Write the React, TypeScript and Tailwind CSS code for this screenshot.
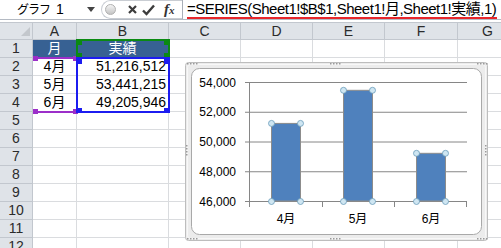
import React from 'react';

const sheetFont = "font-['Liberation_Sans','Noto_Sans_CJK_JP',sans-serif]";

const columns = ['A', 'B', 'C', 'D', 'E', 'F', 'G', ''];

type Row = { a?: string; b?: string; head?: boolean };

const rows: Row[] = [
  { a: '月', b: '実績', head: true },
  { a: '4月', b: '51,216,512' },
  { a: '5月', b: '53,441,215' },
  { a: '6月', b: '49,205,946' },
  {}, {}, {}, {}, {}, {}, {}, {},
];

const data = [
  { label: '4月', value: 51216512 / 1000 },
  { label: '5月', value: 53441215 / 1000 },
  { label: '6月', value: 49205946 / 1000 },
];

// chart y scale: 46,000 at 139, 54,000 at 20
const yOf = (v: number) => 139 - ((v - 46000) / 8000) * 119;

function Grips({ x, y, vertical }: { x: number; y: number; vertical?: boolean }) {
  return (
    <g fill="#9a9a9a">
      {[0, 1, 2, 3].map((i) => (
        <rect key={i} x={vertical ? x : x + i * 3} y={vertical ? y + i * 3 : y} width="1.5" height="1.5" />
      ))}
    </g>
  );
}

function Chart() {
  const bars = [86, 158, 231];
  return (
    <svg width="304" height="180" viewBox="0 0 304 180" className={sheetFont}>
      <rect x="0.5" y="0.5" width="302" height="178" rx="3" fill="#ececec" stroke="#bdbdbd" />
      <rect x="2.5" y="2.5" width="298" height="174" rx="3" fill="none" stroke="#f8f8f8" />
      <rect x="6.5" y="6.5" width="290" height="166" rx="8" fill="#ffffff" stroke="#a9a9a9" />
      <Grips x={145} y={1} />
      <Grips x={145} y={176} />
      <Grips x={1} y={83} vertical />
      <Grips x={300} y={83} vertical />
      <Grips x={2} y={1} />
      <Grips x={292} y={1} />
      <Grips x={2} y={176} />
      <Grips x={292} y={176} />
      {[54000, 52000, 50000, 48000, 46000].map((v) => (
        <g key={v}>
          <line x1="60" x2="282" y1={yOf(v) + 0.5} y2={yOf(v) + 0.5} stroke="#868686" />
          <text x="51" y={yOf(v) + 4.5} fontSize="12" textAnchor="end" fill="#000">
            {v.toLocaleString('en-US')}
          </text>
        </g>
      ))}
      <line x1="64.5" x2="64.5" y1="20" y2="140" stroke="#868686" />
      {[64.5, 137.5, 209.5, 281.5].map((x) => (
        <line key={x} x1={x} x2={x} y1="139" y2="145" stroke="#868686" />
      ))}
      {data.map((d, i) => {
        const x = bars[i];
        const top = yOf(d.value);
        return (
          <g key={d.label}>
            <rect x={x + 0.5} y={top} width="29" height={139 - top} fill="#4f81bd" stroke="#8c8c8c" />
            {[
              [x + 0.5, top],
              [x + 29.5, top],
              [x + 0.5, 139.5],
              [x + 29.5, 139.5],
            ].map(([cx, cy], k) => (
              <circle key={k} cx={cx} cy={cy} r="3" fill="#cfe6f2" stroke="#6a9cba" strokeWidth="0.8" />
            ))}
            <text x={x + 15} y="161" fontSize="12" textAnchor="middle" fill="#000">
              {d.label}
            </text>
          </g>
        );
      })}
    </svg>
  );
}

// a highlighted range with square handles on its corners
function Range({ className, color, handles }: { className: string; color: string; handles: string[] }) {
  return (
    <div className={`absolute ${className}`}>
      {handles.map((h) => (
        <div key={h} className={`absolute w-[5px] h-[5px] ${color} ${h}`} />
      ))}
    </div>
  );
}

export default function App() {
  return (
    <div className={`w-[501px] h-[248px] overflow-hidden bg-white relative ${sheetFont}`}>
      {/* formula bar */}
      <div className="flex h-[20px] bg-white border-b border-[#b4bac3]">
        <div className="w-[99px] shrink-0 flex items-center pl-[17px] text-black whitespace-nowrap">
          <span className="tracking-[-1px] text-[12px]">グラフ</span>
          <span className="ml-[6px] text-[14px]">1</span>
          <svg width="8" height="5" className="ml-[23px] shrink-0">
            <path d="M0 0 L8 0 L4 5 Z" fill="#444" />
          </svg>
        </div>
        <div className="w-[83px] shrink-0 flex items-center pl-[2px]">
          <div className="h-[19px] flex-1 flex items-center rounded-l-full border border-r-0 border-[#c9cdd3] bg-white">
            <div className="ml-[3px] w-[11px] h-[11px] rounded-full bg-gradient-to-b from-[#f4f4f4] to-[#c4c4c4] border border-[#b0b0b0]" />
            <svg width="9" height="9" className="ml-[12px]" viewBox="0 0 9 9">
              <path d="M1 1 L8 8 M8 1 L1 8" stroke="#3c3c3c" strokeWidth="2.2" />
            </svg>
            <svg width="13" height="12" className="ml-[5px]" viewBox="0 0 13 12">
              <path d="M1 6.5 L4.5 10 L12 1.5" stroke="#3c3c3c" strokeWidth="2.4" fill="none" />
            </svg>
            <span className="ml-[9px] font-['Liberation_Serif',serif] italic font-bold text-[15px] text-[#333] leading-none">
              f<span className="text-[11px]">x</span>
            </span>
          </div>
        </div>
        <div className="flex-1 border-l border-[#a9afb8] pl-[4px] relative flex items-center overflow-hidden">
          <span className="text-[15px] text-black whitespace-nowrap tracking-[-0.5px]">
            =SERIES(Sheet1!$B$1,Sheet1!月,Sheet1!実績,1)
          </span>
          <div className="absolute left-[4px] w-[310px] bottom-[0px] h-[2px] bg-[#e8262b]" />
        </div>
      </div>
      <div className="h-[2px] bg-white" />

      {/* sheet grid */}
      <div className="relative">
        <div className="grid grid-cols-[33px_44px_92px_72px_72px_72px_73px_60px_60px] auto-rows-[18px]">
          <div className="bg-[#dfe3e8] border-r border-b border-t border-[#c2c7ce] flex items-end justify-end pr-[2px] pb-[3px]">
            <svg width="9" height="9">
              <path d="M9 0 L9 9 L0 9 Z" fill="#c3c7cc" />
            </svg>
          </div>
          {columns.map((c, i) => (
            <div
              key={i}
              className="bg-[#dfe3e8] border-r border-b border-t border-[#c2c7ce] flex items-center justify-center text-[14px] text-[#2b2b2b]"
            >
              {c}
            </div>
          ))}
          {rows.map((r, ri) => (
            <React.Fragment key={ri}>
              <div className="bg-[#dfe3e8] border-r border-b border-[#c2c7ce] flex items-center justify-center text-[14px] text-[#2b2b2b]">
                {ri + 1}
              </div>
              <div
                className={`border-r border-b flex items-center justify-center text-[14px] ${
                  r.head ? 'bg-[#376193] text-white border-[#376193]' : 'border-[#dadcdf] text-black'
                }`}
              >
                {r.a}
              </div>
              <div
                className={`border-r border-b flex items-center text-[14px] ${
                  r.head
                    ? 'bg-[#376193] text-white border-[#376193] justify-center'
                    : 'border-[#dadcdf] text-black justify-end pr-[2px]'
                }`}
              >
                {r.b}
              </div>
              {[0, 1, 2, 3, 4, 5].map((k) => (
                <div key={k} className="border-r border-b border-[#dadcdf]" />
              ))}
            </React.Fragment>
          ))}
        </div>

        {/* range highlights of the selected series */}
        <Range
          className="left-[33px] top-[35px] w-[45px] h-[56px] border-t-2 border-b-2 border-[#9c2fc9]"
          color="bg-[#9c2fc9]"
          handles={['left-[0px] top-[-3px]', 'right-[0px] top-[-3px]', 'left-[0px] bottom-[-3px]', 'right-[0px] bottom-[-3px]']}
        />
        <Range
          className="left-[76px] top-[17px] w-[94px] h-[20px] border-2 border-[#0a8a12]"
          color="bg-[#0a8a12]"
          handles={['left-[-1px] top-[-1px]', 'right-[-1px] top-[-1px]', 'left-[-1px] bottom-[-1px]', 'right-[-1px] bottom-[-1px]']}
        />
        <Range
          className="left-[76px] top-[35px] w-[94px] h-[56px] border-2 border-[#1c1cf0]"
          color="bg-[#1c1cf0]"
          handles={['left-[-1px] top-[0px]', 'right-[-1px] top-[0px]', 'left-[-1px] bottom-[-2px]', 'right-[-1px] bottom-[-2px]']}
        />

        {/* embedded chart floating over the cells */}
        <div className="absolute left-[185px] top-[40px]">
          <Chart />
        </div>
      </div>
    </div>
  );
}
